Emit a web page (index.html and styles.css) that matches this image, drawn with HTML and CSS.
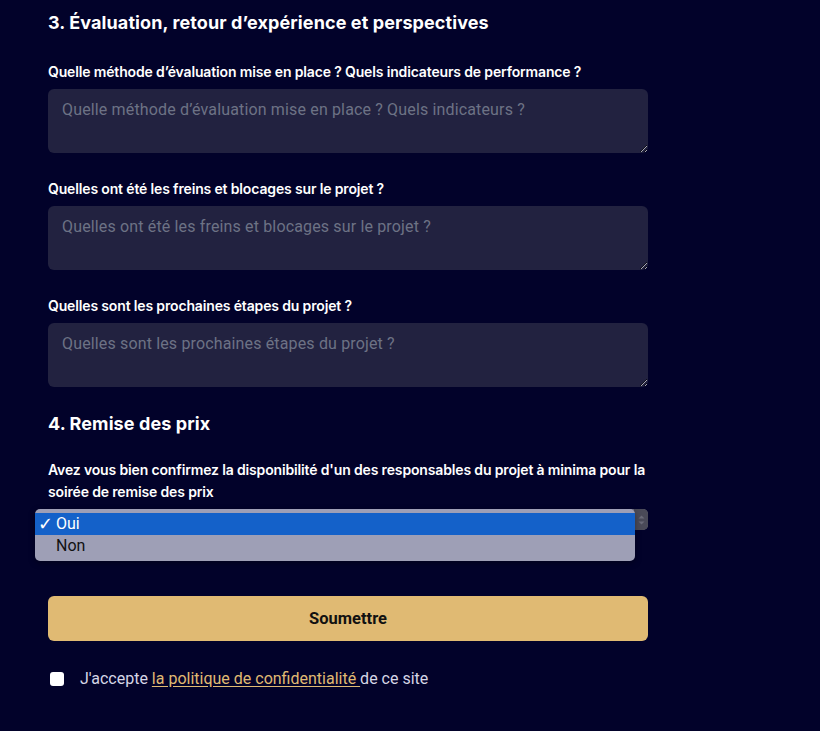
FILE: index.html
```html
<!DOCTYPE html>
<html lang="fr">
<head>
<meta charset="utf-8">
<title>Formulaire</title>
<link rel="stylesheet" href="styles.css">
</head>
<body>
<main class="form">
  <h2 class="section-title">3. Évaluation, retour d’expérience et perspectives</h2>

  <div class="field">
    <label class="label">Quelle méthode d’évaluation mise en place ? Quels indicateurs de performance ?</label>
    <textarea class="textarea" placeholder="Quelle méthode d’évaluation mise en place ? Quels indicateurs ?"></textarea>
  </div>

  <div class="field">
    <label class="label">Quelles ont été les freins et blocages sur le projet ?</label>
    <textarea class="textarea" placeholder="Quelles ont été les freins et blocages sur le projet ?"></textarea>
  </div>

  <div class="field">
    <label class="label">Quelles sont les prochaines étapes du projet ?</label>
    <textarea class="textarea" placeholder="Quelles sont les prochaines étapes du projet ?"></textarea>
  </div>

  <h2 class="section-title second">4. Remise des prix</h2>

  <div class="field">
    <label class="label multi">Avez vous bien confirmez la disponibilité d'un des responsables du projet à minima pour la soirée de remise des prix</label>
    <div class="select-wrap">
      <div class="select">
        <span class="stepper">
          <svg width="9" height="14" viewBox="0 0 9 14"><path d="M1.5 5.5 L4.5 2.5 L7.5 5.5Z" fill="#6a6a78"/><path d="M1.5 8.5 L4.5 11.5 L7.5 8.5Z" fill="#6a6a78"/></svg>
        </span>
      </div>
      <ul class="popup">
        <li class="option selected"><span class="check">✓</span>Oui</li>
        <li class="option">Non</li>
      </ul>
    </div>
  </div>

  <button class="submit" type="button">Soumettre</button>

  <div class="consent">
    <span class="checkbox"></span>
    <span class="consent-text">J'accepte <a href="#" class="link">la politique de confidentialité </a>de ce site</span>
  </div>
</main>
</body>
</html>
```

FILE: styles.css
```css
* { box-sizing: border-box; }
html, body {
  margin: 0;
  padding: 0;
  background: #02022a;
}
body {
  font-family: Roboto, "Liberation Sans", sans-serif;
  color: #ffffff;
}
.form {
  width: 600px;
  margin-left: 48px;
  padding-top: 10px;
  display: flex;
  flex-direction: column;
}
.section-title {
  font-family: Inter, "Noto Sans", sans-serif;
  font-size: 18px;
  font-weight: 700;
  line-height: 26px;
  margin: 0 0 26px 0;
  letter-spacing: 0.1px;
}
.section-title.second {
  line-height: 22px;
  margin-top: 0;
  margin-bottom: 24px;
}
.field {
  display: flex;
  flex-direction: column;
  margin-bottom: 26px;
}
.label {
  font-family: Inter, "Noto Sans", sans-serif;
  font-size: 14px;
  font-weight: 600;
  line-height: 20px;
  margin-bottom: 7px;
  letter-spacing: -0.15px;
}
.label.multi {
  line-height: 22px;
  margin-bottom: 6px;
}
.textarea {
  display: block;
  width: 600px;
  height: 64px;
  background: #222240;
  border: none;
  border-radius: 6px;
  padding: 10px 14px;
  font-family: Roboto, "Liberation Sans", sans-serif;
  font-size: 16px;
  letter-spacing: 0.15px;
  line-height: 22px;
  color: #ffffff;
  resize: vertical;
  outline: none;
}
.textarea::placeholder { color: #6d7285; }

.select-wrap {
  position: relative;
  height: 21px;
  margin-bottom: 40px;
}
.select {
  width: 600px;
  height: 21px;
  background: #6c6c7c;
  border-radius: 5px;
  display: flex;
  justify-content: flex-end;
  align-items: center;
}
.stepper {
  width: 14px;
  height: 21px;
  display: flex;
  align-items: center;
  justify-content: center;
  background: #4a4a58;
  border-radius: 0 5px 5px 0;
}
.popup {
  position: absolute;
  left: -13px;
  top: 0;
  width: 600px;
  margin: 0;
  padding: 4px 0;
  list-style: none;
  background: #9e9fb6;
  border-radius: 5px;
  box-shadow: 0 2px 6px rgba(0,0,0,0.35);
}
.option {
  height: 22px;
  line-height: 22px;
  font-family: Roboto, "Liberation Sans", sans-serif;
  font-size: 16px;
  color: #111111;
  padding-left: 21px;
  position: relative;
}
.option.selected {
  background: #1461c9;
  color: #ffffff;
}
.check {
  position: absolute;
  left: 3px;
  top: 0;
  font-family: "DejaVu Sans", sans-serif;
  font-size: 18px;
  font-weight: 700;
}
.submit {
  width: 600px;
  height: 45px;
  background: #e0ba73;
  border: none;
  border-radius: 6px;
  font-family: Roboto, "Liberation Sans", sans-serif;
  font-size: 16.5px;
  font-weight: 700;
  color: #111111;
  padding: 0;
}
.consent {
  display: flex;
  align-items: center;
  margin-top: 27px;
  margin-left: 2px;
  gap: 16px;
}
.checkbox {
  width: 14px;
  height: 14px;
  background: #ffffff;
  border-radius: 3px;
  flex: none;
}
.consent-text {
  font-family: Roboto, "Liberation Sans", sans-serif;
  font-size: 16px;
  color: #d6d6e6;
  line-height: 22px;
}
.link {
  color: #e0ba73;
  text-decoration: underline;
  text-underline-offset: 2px;
}
```
